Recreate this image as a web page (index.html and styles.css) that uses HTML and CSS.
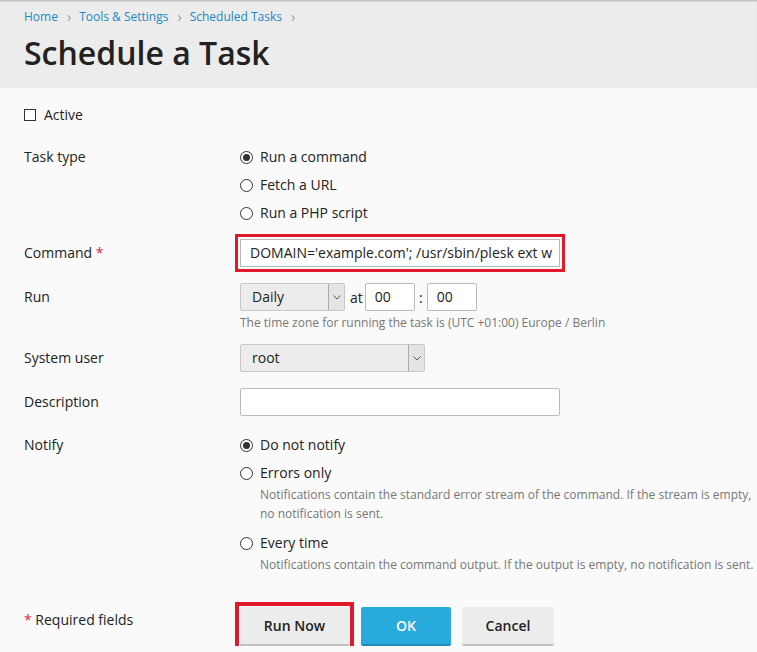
FILE: index.html
```html
<!DOCTYPE html>
<html>
<head>
<meta charset="utf-8">
<link rel="stylesheet" href="styles.css">
</head>
<body>
<div class="header">
  <div class="crumbs">
    <a class="crumb">Home</a><span class="chev">›</span>
    <a class="crumb">Tools &amp; Settings</a><span class="chev">›</span>
    <a class="crumb">Scheduled Tasks</a><span class="chev">›</span>
  </div>
  <h1 class="title">Schedule a Task</h1>
</div>

<div class="content">
  <div class="active-row">
    <span class="checkbox"></span><span>Active</span>
  </div>

  <div class="row row-task">
    <div class="label">Task type</div>
    <div class="options">
      <div class="option"><span class="radio checked"></span>Run a command</div>
      <div class="option"><span class="radio"></span>Fetch a URL</div>
      <div class="option"><span class="radio"></span>Run a PHP script</div>
    </div>
  </div>

  <div class="row row-command">
    <div class="label">Command <span class="req">*</span></div>
    <div class="field">
      <div class="input wide highlight">DOMAIN='example.com'; /usr/sbin/plesk ext w</div>
    </div>
  </div>

  <div class="row row-run">
    <div class="label">Run</div>
    <div class="field">
      <div class="inline">
        <div class="select sel-daily"><span class="sel-text">Daily</span><span class="sel-arrow"><svg width="8" height="5" viewBox="0 0 8 5"><path d="M0.5 0.5 L4 4 L7.5 0.5" fill="none" stroke="#555" stroke-width="1"/></svg></span></div>
        <span class="at">at</span>
        <div class="input time">00</div>
        <span class="colon">:</span>
        <div class="input time">00</div>
      </div>
      <div class="hint">The time zone for running the task is (UTC +01:00) Europe / Berlin</div>
    </div>
  </div>

  <div class="row row-user">
    <div class="label">System user</div>
    <div class="field">
      <div class="select sel-user"><span class="sel-text">root</span><span class="sel-arrow"><svg width="8" height="5" viewBox="0 0 8 5"><path d="M0.5 0.5 L4 4 L7.5 0.5" fill="none" stroke="#555" stroke-width="1"/></svg></span></div>
    </div>
  </div>

  <div class="row row-desc">
    <div class="label">Description</div>
    <div class="field">
      <div class="input wide"></div>
    </div>
  </div>

  <div class="row row-notify">
    <div class="label">Notify</div>
    <div class="notify">
      <div class="nopt"><div class="nlabel"><span class="radio checked"></span>Do not notify</div></div>
      <div class="nopt">
        <div class="nlabel"><span class="radio"></span>Errors only</div>
        <div class="nhint">Notifications contain the standard error stream of the command. If the stream is empty, no notification is sent.</div>
      </div>
      <div class="nopt">
        <div class="nlabel"><span class="radio"></span>Every time</div>
        <div class="nhint">Notifications contain the command output. If the output is empty, no notification is sent.</div>
      </div>
    </div>
  </div>

  <div class="row row-footer">
    <div class="label req-label"><span class="req">*</span> Required fields</div>
    <div class="buttons">
      <button class="btn run">Run Now</button>
      <button class="btn primary">OK</button>
      <button class="btn cancel">Cancel</button>
    </div>
  </div>
</div>
</body>
</html>
```

FILE: styles.css
```css
* { box-sizing: border-box; }
html, body {
  margin: 0;
  padding: 0;
  background: #fafafa;
  font-family: "Open Sans", "Liberation Sans", sans-serif;
  font-size: 14px;
  color: #222;
  overflow: hidden;
}
.header {
  height: 88px;
  background: #ececec;
  padding: 8px 24px 0;
  box-shadow: inset 0 2px 2px -1px rgba(0,0,0,0.25);
}
.crumbs {
  height: 18px;
  line-height: 18px;
  font-size: 12px;
  display: flex;
  align-items: center;
}
.crumb { color: #1a88c9; }
.chev {
  color: #999;
  margin: 0 8px 0 9px;
  font-size: 14px;
}
.title {
  margin: 7px 0 0;
  font-size: 32px;
  line-height: 40px;
  font-weight: 600;
  color: #222;
}
.content {
  padding: 17px 0 0 24px;
}
.active-row {
  display: flex;
  align-items: center;
  height: 20px;
  line-height: 20px;
}
.checkbox {
  width: 12px;
  height: 12px;
  border: 1px solid #333;
  background: #fff;
  margin-right: 8px;
}
.row {
  display: grid;
  grid-template-columns: 216px 1fr;
}
.label {
  line-height: 28px;
}
.row-task { margin-top: 18px; }
.options .option {
  height: 28px;
  line-height: 28px;
  display: flex;
  align-items: center;
}
.radio {
  width: 13px;
  height: 13px;
  border: 1px solid #333;
  border-radius: 50%;
  background: #fff;
  margin-right: 7px;
  position: relative;
  flex: none;
}
.radio.checked::after {
  content: "";
  position: absolute;
  left: 2px;
  top: 2px;
  width: 7px;
  height: 7px;
  border-radius: 50%;
  background: #333;
}
.row-command { margin-top: 12px; }
.input {
  height: 28px;
  line-height: 26px;
  border: 1px solid #bbb;
  border-radius: 2px;
  background: #fff;
  padding: 0 9px;
  white-space: nowrap;
  overflow: hidden;
  color: #222;
}
.input.wide { width: 320px; }
.highlight {
  border-radius: 0;
  outline: 3px solid #e2192a;
  outline-offset: 2px;
}
.row-run { margin-top: 16px; }
.inline {
  display: flex;
  align-items: center;
}
.select {
  height: 28px;
  display: flex;
  border: 1px solid #c8c8c8;
  border-radius: 2px;
  background: #ececec;
}
.sel-text {
  flex: 1;
  line-height: 26px;
  padding-left: 11px;
  color: #222;
}
.sel-arrow {
  width: 16px;
  border-left: 1px solid #aaa;
  background: #e4e4e4;
  display: flex;
  align-items: center;
  justify-content: center;
}
.sel-daily { width: 105px; }
.sel-user { width: 185px; }
.at { margin: 0 2px 0 5px; }
.input.time { width: 50px; padding: 0 9px; }
.colon { width: 12px; text-align: center; }
.hint {
  font-size: 12px;
  color: #777;
  line-height: 16px;
  margin-top: 4px;
}
.row-user { margin-top: 13px; }
.row-desc { margin-top: 16px; }
.row-notify { margin-top: 15px; }
.nopt { padding: 4px 0; }
.nlabel {
  display: flex;
  align-items: center;
  height: 20px;
  line-height: 20px;
}
.nhint {
  font-size: 12px;
  color: #777;
  line-height: 19px;
  padding-left: 20px;
  margin-top: 2px;
  margin-bottom: 2px;
  width: 520px;
}
.row-footer { margin-top: 27px; }
.req { color: #e0284a; }
.req-label { line-height: 22px; padding-top: 2px; }
.buttons {
  display: flex;
  gap: 11px;
}
.btn {
  font-family: "Open Sans", "Liberation Sans", sans-serif;
  font-size: 14px;
  font-weight: 600;
  height: 39px;
  border: none;
  border-bottom: 2px solid #c2c2c2;
  border-radius: 2px;
  background: #ececec;
  color: #222;
  padding: 0 20px;
  margin: 0;
}
.btn.run {
  width: 109px;
  border-radius: 0;
  outline: 4px solid #e2192a;
  outline-offset: 1px;
  margin-right: 1px;
}
.btn.primary {
  width: 90px;
  background: #28aadc;
  border-bottom-color: #1f8cbd;
  color: #fff;
}
.btn.cancel { width: 92px; }
```
